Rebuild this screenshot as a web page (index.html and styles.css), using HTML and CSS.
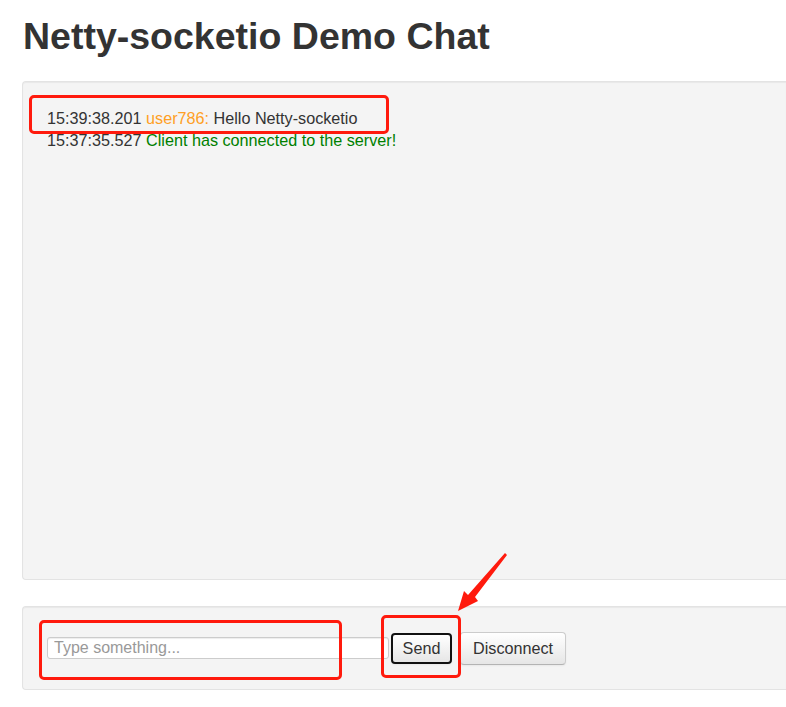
FILE: index.html
```html
<!DOCTYPE html>
<html>
<head>
<meta charset="utf-8">
<title>Netty-socketio Demo Chat</title>
<link rel="stylesheet" href="styles.css">
</head>
<body>
<div class="container">
  <h1 class="title">Netty-socketio Demo Chat</h1>
  <div class="well console">
    <div class="line"><span class="time">15:39:38.201</span> <span class="user">user786:</span> Hello Netty-socketio</div>
    <div class="line"><span class="time">15:37:35.527</span> <span class="sys">Client has connected to the server!</span></div>
  </div>
  <form class="well controls" onsubmit="return false">
    <input class="msg" type="text" placeholder="Type something...">
    <button class="btn btn-send" type="button">Send</button>
    <button class="btn" type="button">Disconnect</button>
  </form>
</div>

<div class="mark mark-msg"></div>
<div class="mark mark-input"></div>
<div class="mark mark-send"></div>
<svg class="arrow" width="60" height="62" viewBox="0 0 60 62">
  <polygon points="49,0 51,2 19,44 22,48 2,58 8,38 12,42" fill="#ff1a0d"/>
</svg>
</body>
</html>
```
FILE: styles.css
```css
html, body {
  margin: 0;
  padding: 0;
  overflow: hidden;
  background: #fff;
}
body {
  font-family: "Liberation Sans", Arial, sans-serif;
  font-size: 16.2px;
  color: #333;
  position: relative;
  width: 786px;
  height: 707px;
}
.container {
  padding-left: 22px;
}
.title {
  margin: 16px 0 0 1px;
  font-size: 37.5px;
  line-height: 40px;
  font-weight: bold;
  color: #333;
}
.well {
  background: #f4f4f4;
  border: 1px solid #e3e3e3;
  border-right: none;
  border-radius: 4px 0 0 4px;
  box-shadow: inset 0 1px 1px rgba(0,0,0,0.05);
  box-sizing: border-box;
}
.console {
  margin-top: 25px;
  height: 499px;
  padding: 25px 24px 24px;
  line-height: 22px;
}
.line { white-space: nowrap; }
.time { color: #333; }
.user { color: #ffa024; }
.sys { color: #008000; }
.controls {
  margin: 26px 0 0;
  height: 84px;
  padding: 0 24px;
  display: flex;
  align-items: center;
}
.msg {
  width: 342px;
  height: 22px;
  box-sizing: border-box;
  margin: 0;
  padding: 0 6px;
  border: 1px solid #ccc;
  border-radius: 3px;
  background: #fff;
  font-family: "Liberation Sans", Arial, sans-serif;
  font-size: 16px;
  color: #333;
  box-shadow: inset 0 1px 1px rgba(0,0,0,0.075);
  outline: none;
}
.msg::placeholder { color: #999; }
.btn {
  height: 33px;
  margin: 0 0 0 8px;
  padding: 0 12px;
  font-family: "Liberation Sans", Arial, sans-serif;
  font-size: 16.2px;
  color: #333;
  background: linear-gradient(#ffffff, #e6e6e6);
  border: 1px solid #ccc;
  border-bottom-color: #b3b3b3;
  border-radius: 4px;
  box-shadow: inset 0 1px 0 rgba(255,255,255,0.2), 0 1px 2px rgba(0,0,0,0.05);
}
.btn-send {
  margin-left: 2px;
  width: 61px;
  height: 31px;
  padding: 0;
  border: 2px solid #111;
  border-radius: 4px;
}
.mark {
  position: absolute;
  border: 3px solid #ff1a0d;
  border-radius: 5px;
  box-sizing: border-box;
}
.mark-msg { left: 29px; top: 95px; width: 360px; height: 39px; }
.mark-input { left: 39px; top: 620px; width: 303px; height: 60px; }
.mark-send { left: 381px; top: 615px; width: 80px; height: 63px; }
.arrow {
  position: absolute;
  left: 456px;
  top: 553px;
}
```
